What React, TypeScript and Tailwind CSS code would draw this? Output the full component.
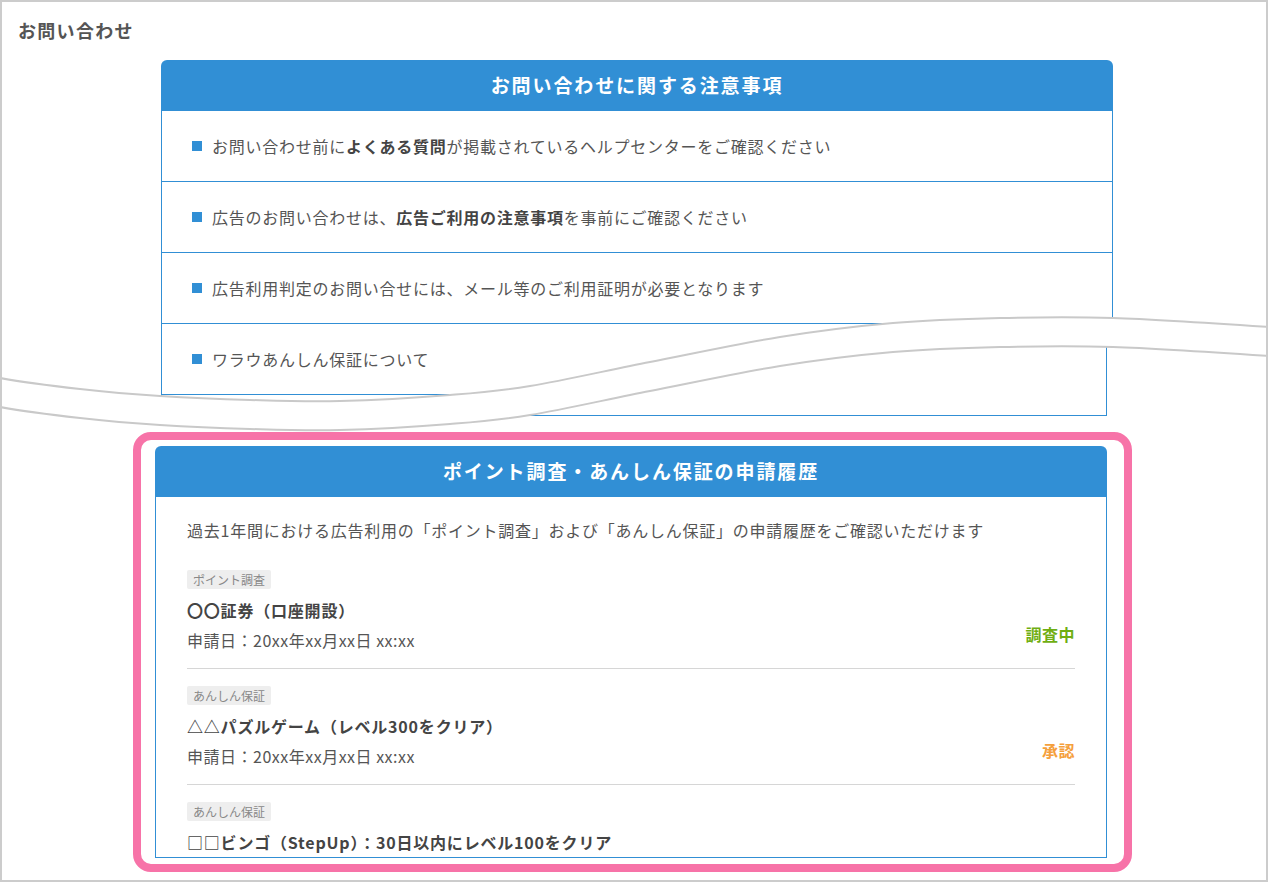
type Pt = [number, number];

// smooth curve through points (catmull-rom -> bezier)
function segs(pts: Pt[]) {
  let d = "";
  for (let i = 0; i < pts.length - 1; i++) {
    const p0 = pts[i - 1] ?? pts[i];
    const p1 = pts[i];
    const p2 = pts[i + 1];
    const p3 = pts[i + 2] ?? p2;
    const c1 = [p1[0] + (p2[0] - p0[0]) / 6, p1[1] + (p2[1] - p0[1]) / 6];
    const c2 = [p2[0] - (p3[0] - p1[0]) / 6, p2[1] - (p3[1] - p1[1]) / 6];
    d += ` C${c1[0]},${c1[1]} ${c2[0]},${c2[1]} ${p2[0]},${p2[1]}`;
  }
  return d;
}

const upper: Pt[] = [
  [-20, 370], [0, 378], [80, 389], [160, 396], [250, 400], [340, 401], [450, 395],
  [530, 386], [650, 362], [780, 337], [893, 323], [1000, 318], [1113, 318], [1269, 327], [1290, 330],
];
const lower: Pt[] = upper.map(([x, y]) => [x, y + 29] as Pt);
const lowerRev = [...lower].reverse();

const upperD = `M${upper[0][0]},${upper[0][1]}${segs(upper)}`;
const lowerD = `M${lower[0][0]},${lower[0][1]}${segs(lower)}`;
const bandD = `${upperD} L${lowerRev[0][0]},${lowerRev[0][1]}${segs(lowerRev)} Z`;

function Wave() {
  return (
    <svg
      className="absolute left-[-2px] top-[-2px] z-20 pointer-events-none"
      width={1268}
      height={882}
      viewBox="0 0 1268 882"
    >
      <path d={bandD} fill="#fff" />
      <path d={upperD} fill="none" stroke="#c9c9c9" strokeWidth={2} />
      <path d={lowerD} fill="none" stroke="#c9c9c9" strokeWidth={2} />
    </svg>
  );
}

function NoticeRow({ children }: { children: React.ReactNode }) {
  return (
    <div className="h-[71px] flex items-center pl-[30px] border-x border-b border-[#318fd5]">
      <span className="w-[10px] h-[10px] bg-[#318fd5] shrink-0" />
      <span className="ml-[10px] text-[16px] tracking-[0.75px] text-[#555]">{children}</span>
    </div>
  );
}

const history = [
  {
    tag: "ポイント調査",
    title: "〇〇証券（口座開設）",
    date: "申請日：20xx年xx月xx日 xx:xx",
    status: "調査中",
    color: "text-[#6fae12]",
  },
  {
    tag: "あんしん保証",
    title: "△△パズルゲーム（レベル300をクリア）",
    date: "申請日：20xx年xx月xx日 xx:xx",
    status: "承認",
    color: "text-[#f5a03c]",
  },
  {
    tag: "あんしん保証",
    title: "□□ビンゴ（StepUp）：30日以内にレベル100をクリア",
  },
];

export default function App() {
  return (
    <div className="bg-white w-[1269px] h-[882px] font-['Noto_Sans_CJK_JP','Noto_Sans',sans-serif]">
      <div className="relative w-[1268px] h-[882px] border-2 border-[#cccccc] overflow-hidden">
        {/* upper half, cut along the tear */}
        <div className="relative z-10 bg-white h-[440px] [clip-path:polygon(0_0,100%_0,1267px_339px,1111px_330px,998px_330px,891px_335px,778px_349px,648px_374px,528px_398px,448px_407px,338px_413px,248px_412px,158px_408px,78px_401px,0_390px)]">
          <div className="pt-[14px] pl-[16px]">
            <h1 className="text-[18px] leading-[28px] font-bold tracking-[1.3px] text-[#555]">お問い合わせ</h1>
          </div>
          <div className="mt-[16px] ml-[159px] w-[952px]">
            <div className="h-[51px] rounded-t-[6px] bg-[#318fd5] flex items-center justify-center">
              <span className="text-white text-[19px] font-bold tracking-[1.9px]">お問い合わせに関する注意事項</span>
            </div>
            <NoticeRow>
              お問い合わせ前に<b className="font-bold text-[#444]">よくある質問</b>が掲載されているヘルプセンターをご確認ください
            </NoticeRow>
            <NoticeRow>
              広告のお問い合わせは、<b className="font-bold text-[#444]">広告ご利用の注意事項</b>を事前にご確認ください
            </NoticeRow>
            <NoticeRow>広告利用判定のお問い合せには、メール等のご利用証明が必要となります</NoticeRow>
            <NoticeRow>ワラウあんしん保証について</NoticeRow>
            <div className="h-[60px] border-x border-[#318fd5]" />
          </div>
        </div>

        {/* lower half */}
        <div className="mt-[-140px]">
          <div className="ml-[153px] w-[952px] h-[114px] border-x border-b border-[#318fd5]" />
          <div className="mt-[16px] ml-[131px] w-[999px] h-[440px] border-[8px] border-[#f773a8] rounded-[18px] flex flex-col pt-[6px] pl-[14px] pb-[6px]">
            <div className="w-[952px] flex-1 overflow-hidden flex flex-col">
              <div className="h-[51px] shrink-0 rounded-t-[6px] bg-[#318fd5] flex items-center justify-center">
                <span className="text-white text-[19px] font-bold tracking-[1.9px]">ポイント調査・あんしん保証の申請履歴</span>
              </div>
              <div className="flex-1 border-x border-b border-[#318fd5] px-[31px] pt-[18px] overflow-hidden">
                <p className="text-[16px] leading-[30px] tracking-[0.75px] text-[#555]">
                  過去1年間における広告利用の「ポイント調査」および「あんしん保証」の申請履歴をご確認いただけます
                </p>
                <div className="mt-[25px]">
                  {history.map((h, i) => (
                    <div
                      key={i}
                      className={`pb-[13px] ${h.date ? "border-b border-[#d6d6d6]" : ""} ${i > 0 ? "pt-[17px]" : ""}`}
                    >
                      <div className="flex">
                        <span className="h-[19px] px-[6px] rounded-[2px] bg-[#eeeeee] text-[12px] leading-[19px] text-[#888]">
                          {h.tag}
                        </span>
                      </div>
                      <div className="mt-[6px] text-[16px] leading-[30px] font-bold tracking-[0.8px] text-[#444]">{h.title}</div>
                      {h.date && (
                        <div className="flex justify-between items-start">
                          <span className="text-[16px] leading-[30px] tracking-[0.5px] text-[#555]">{h.date}</span>
                          <span className={`text-[16px] leading-[18px] font-bold tracking-[0.5px] ${h.color}`}>{h.status}</span>
                        </div>
                      )}
                    </div>
                  ))}
                </div>
              </div>
            </div>
          </div>
        </div>

        <Wave />
      </div>
    </div>
  );
}
